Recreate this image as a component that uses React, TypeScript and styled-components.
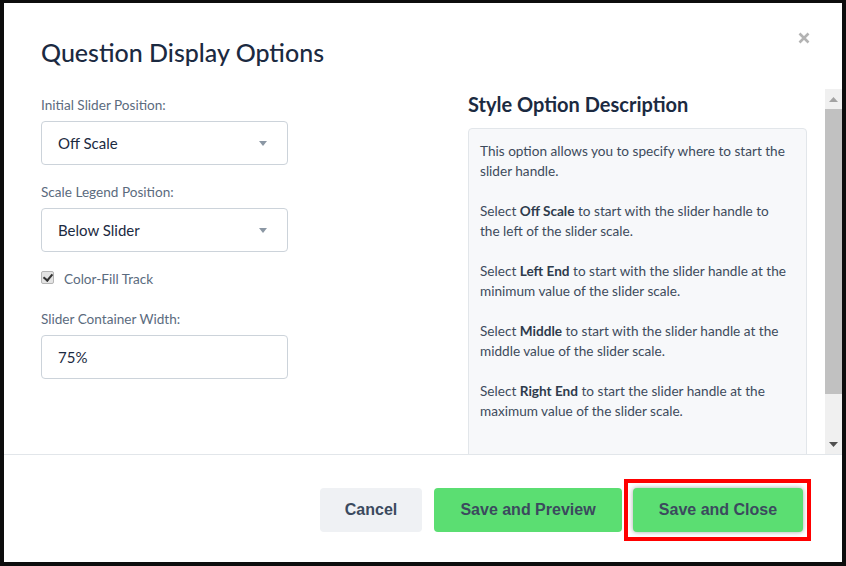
import React from "react";
import styled, { createGlobalStyle } from "styled-components";

//STYLES
const GlobalStyle = createGlobalStyle`
  * { box-sizing: border-box; }
  html, body { margin: 0; padding: 0; background: #ffffff; }
  body { font-family: Lato, "Open Sans", sans-serif; }
`;

const Frame = styled.div`
  width: 846px;
  height: 566px;
  border: 4px solid #0d0d0d;
  border-top-width: 3px;
  background: #ffffff;
  display: flex;
  flex-direction: column;
  overflow: hidden;
`;

const Header = styled.div`
  display: flex;
  justify-content: space-between;
  align-items: flex-start;
  padding: 33px 30px 21px 37px;
  flex-shrink: 0;
`;

const Title = styled.h1`
  margin: 0;
  font-size: 25px;
  line-height: 32px;
  font-weight: 500;
  color: #1b2a41;
`;

const CloseButton = styled.button`
  border: none;
  background: none;
  padding: 0;
  margin-top: -6px;
  width: 16px;
  height: 16px;
  cursor: pointer;
  display: flex;
`;

const Body = styled.div`
  flex: 1;
  min-height: 0;
  display: flex;
`;

const Scroller = styled.div`
  flex: 1;
  overflow: hidden;
  padding: 7px 18px 0 37px;
`;

// classic scrollbar drawn beside the scrolling content
const ScrollBar = styled.div`
  width: 17px;
  flex-shrink: 0;
  background: #f0f0f0;
  display: flex;
  flex-direction: column;
  align-items: stretch;
`;

const ScrollArrow = styled.div`
  height: 20px;
  display: flex;
  align-items: center;
  justify-content: center;
`;

const ScrollThumb = styled.div`
  height: 285px;
  background: #c1c1c1;
`;

const ScrollSpacer = styled.div`
  flex: 1;
`;

const Columns = styled.div`
  display: grid;
  grid-template-columns: 1fr 339px;
  column-gap: 26px;
  align-items: start;
`;

const LeftColumn = styled.div`
  display: flex;
  flex-direction: column;
`;

const FieldGroup = styled.div<{ $gap?: number }>`
  display: flex;
  flex-direction: column;
  margin-bottom: ${(p) => p.$gap ?? 18}px;
`;

const Label = styled.label`
  font-size: 13.6px;
  line-height: 19px;
  color: #5b6b7e;
  margin-bottom: 6px;
`;

const SelectBox = styled.div`
  width: 247px;
  height: 44px;
  border: 1px solid #ccd3da;
  border-radius: 4px;
  display: flex;
  align-items: center;
  justify-content: space-between;
  padding: 0 20px 0 16px;
  font-size: 15px;
  color: #1b2a41;
  background: #ffffff;
`;

const Caret = styled.span`
  width: 0;
  height: 0;
  border-left: 4.5px solid transparent;
  border-right: 4.5px solid transparent;
  border-top: 5px solid #8b97a4;
`;

const TextInput = styled.input`
  width: 247px;
  height: 44px;
  border: 1px solid #ccd3da;
  border-radius: 4px;
  padding: 0 16px;
  font-family: Lato, "Open Sans", sans-serif;
  font-size: 15px;
  color: #1b2a41;
  outline: none;
`;

const CheckRow = styled.label`
  display: flex;
  align-items: center;
  gap: 10px;
  height: 20px;
  margin-top: -1px;
  margin-bottom: 21px;
  font-size: 13.6px;
  color: #5b6b7e;
  line-height: 20px;
`;

const CheckBox = styled.input`
  appearance: none;
  margin: 0;
  width: 13px;
  height: 13px;
  border: 1px solid #b5b5b5;
  border-radius: 2px;
  background: #e3e3e3;
  position: relative;
  margin-top: -4px;

  &:checked::after {
    content: "";
    position: absolute;
    left: 3px;
    top: 0px;
    width: 4px;
    height: 7px;
    border: solid #333;
    border-width: 0 2px 2px 0;
    transform: rotate(40deg);
  }
`;

const RightColumn = styled.div`
  display: flex;
  flex-direction: column;
`;

const SubTitle = styled.h2`
  margin: -2px 0 14px 0;
  font-size: 20px;
  line-height: 20px;
  font-weight: 700;
  color: #1b2a41;
`;

const DescBox = styled.div`
  background: #f7f8fa;
  border: 1px solid #e2e6ea;
  border-radius: 4px;
  padding: 12px 18px 20px 11px;
  min-height: 384px;
  font-size: 13.6px;
  line-height: 20px;
  color: #3d4b5c;
`;

const Para = styled.p`
  margin: 0 0 20px 0;
  b {
    font-weight: 700;
    color: #2e3b4c;
  }
`;

const Footer = styled.div`
  flex-shrink: 0;
  border-top: 1px solid #e2e6ea;
  display: flex;
  justify-content: flex-end;
  align-items: center;
  gap: 12px;
  padding: 24px 31px 21px 0;
`;

const Button = styled.button<{ $variant?: "gray" | "green" }>`
  height: 44px;
  border: none;
  border-radius: 4px;
  font-family: "Liberation Sans", Arial, sans-serif;
  font-weight: 700;
  font-size: 16px;
  color: #3b4a5e;
  cursor: pointer;
  background: ${(p) => (p.$variant === "green" ? "#5bde72" : "#eff1f4")};
`;

const Highlight = styled.div`
  border: 4px solid #ff0000;
  padding: 5px 4px 5px 5px;
  margin-left: -10px;
  display: flex;
`;

const FocusButton = styled(Button)`
  box-shadow: 0 0 5px rgba(0, 0, 0, 0.35);
`;

export default function App() {
  return (
    <>
      <GlobalStyle />
      <Frame>
        <Header>
          <Title>Question Display Options</Title>
          <CloseButton aria-label="close">
            <svg width="16" height="16" viewBox="0 0 16 16">
              <path
                d="M3.5 3.5 L12.5 12.5 M12.5 3.5 L3.5 12.5"
                stroke="#b3b3b3"
                strokeWidth="2.6"
              />
            </svg>
          </CloseButton>
        </Header>
        <Body>
          <Scroller>
            <Columns>
              <LeftColumn>
                <FieldGroup>
                  <Label>Initial Slider Position:</Label>
                  <SelectBox>
                    <span>Off Scale</span>
                    <Caret />
                  </SelectBox>
                </FieldGroup>
                <FieldGroup>
                  <Label>Scale Legend Position:</Label>
                  <SelectBox>
                    <span>Below Slider</span>
                    <Caret />
                  </SelectBox>
                </FieldGroup>
                <CheckRow>
                  <CheckBox type="checkbox" defaultChecked />
                  Color-Fill Track
                </CheckRow>
                <FieldGroup $gap={0}>
                  <Label>Slider Container Width:</Label>
                  <TextInput defaultValue="75%" />
                </FieldGroup>
              </LeftColumn>
              <RightColumn>
                <SubTitle>Style Option Description</SubTitle>
                <DescBox>
                  <Para>
                    This option allows you to specify where to start the
                    slider handle.
                  </Para>
                  <Para>
                    Select <b>Off Scale</b> to start with the slider handle to
                    the left of the slider scale.
                  </Para>
                  <Para>
                    Select <b>Left End</b> to start with the slider handle at
                    the minimum value of the slider scale.
                  </Para>
                  <Para>
                    Select <b>Middle</b> to start with the slider handle at the
                    middle value of the slider scale.
                  </Para>
                  <Para>
                    Select <b>Right End</b> to start the slider handle at the
                    maximum value of the slider scale.
                  </Para>
                </DescBox>
              </RightColumn>
            </Columns>
          </Scroller>
          <ScrollBar>
            <ScrollArrow>
              <svg width="9" height="5" viewBox="0 0 9 5">
                <path d="M0 5 L4.5 0 L9 5 Z" fill="#a3a3a3" />
              </svg>
            </ScrollArrow>
            <ScrollThumb />
            <ScrollSpacer />
            <ScrollArrow>
              <svg width="9" height="5" viewBox="0 0 9 5">
                <path d="M0 0 L9 0 L4.5 5 Z" fill="#505050" />
              </svg>
            </ScrollArrow>
          </ScrollBar>
        </Body>
        <Footer>
          <Button style={{ width: 102 }}>Cancel</Button>
          <Button $variant="green" style={{ width: 188 }}>
            Save and Preview
          </Button>
          <Highlight>
            <FocusButton $variant="green" style={{ width: 170 }}>
              Save and Close
            </FocusButton>
          </Highlight>
        </Footer>
      </Frame>
    </>
  );
}
